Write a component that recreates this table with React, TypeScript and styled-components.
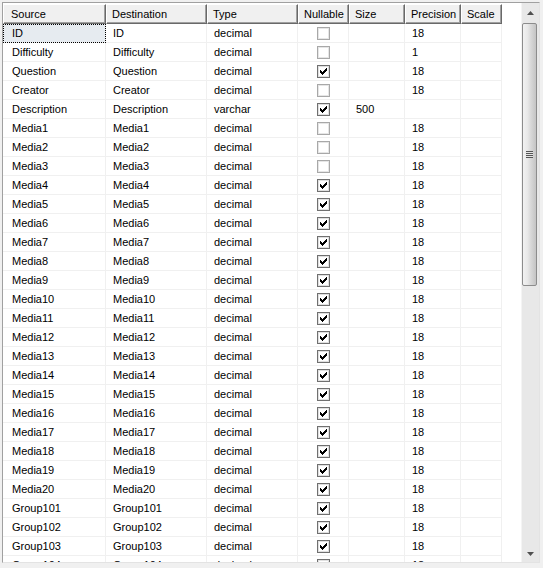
import React from "react";
import styled, { createGlobalStyle } from "styled-components";

const Global = createGlobalStyle`
  html, body { margin: 0; padding: 0; background: #f0f0f0; }
  body { font-family: "Liberation Sans", Arial, sans-serif; font-size: 11px; color: #000; }
`;

const COLS = "103px 101px 91px 51px 56px 56px 41px 1fr";

const Page = styled.div`
  width: 543px;
  height: 568px;
  box-sizing: border-box;
  padding: 2px 3px 5px 2px;
  background: #f0f0f0;
`;

const Frame = styled.div`
  display: flex;
  height: 100%;
  box-sizing: border-box;
  border-top: 1px solid #a0a0a0;
  border-left: 1px solid #a0a0a0;
  border-right: 1px solid #e3e3e3;
  border-bottom: 1px solid #e3e3e3;
  background: #fff;
`;

const GridArea = styled.div`
  flex: 1;
  overflow: hidden;
  display: flex;
  flex-direction: column;
  background: #fff;
`;

const HeaderRow = styled.div`
  display: grid;
  grid-template-columns: ${COLS};
  height: 21px;
  flex: none;
`;

const HeaderCell = styled.div<{ $first?: boolean; $filler?: boolean }>`
  box-sizing: border-box;
  height: 20px;
  margin-top: 1px;
  display: flex;
  align-items: center;
  padding-left: ${(p) => (p.$first ? "7px" : "5px")};
  background: ${(p) => (p.$filler ? "#fff" : "#f0f0f0")};
  border-top: ${(p) => (p.$filler ? "none" : "1px solid #fff")};
  border-left: ${(p) => (p.$filler ? "none" : "1px solid #fff")};
  border-right: ${(p) => (p.$filler ? "none" : "1px solid #696969")};
  border-bottom: ${(p) => (p.$filler ? "none" : "1px solid #696969")};
  box-shadow: ${(p) => (p.$filler ? "none" : "inset -1px -1px 0 #a0a0a0")};
  white-space: nowrap;
  overflow: hidden;
`;

const Body = styled.div`
  display: flex;
  flex-direction: column;
`;

const Row = styled.div`
  display: grid;
  grid-template-columns: ${COLS};
  height: 19px;
  flex: none;
`;

const Cell = styled.div<{ $first?: boolean; $selected?: boolean; $center?: boolean; $filler?: boolean }>`
  box-sizing: border-box;
  height: 19px;
  display: flex;
  align-items: center;
  justify-content: ${(p) => (p.$center ? "center" : "flex-start")};
  padding-left: ${(p) => (p.$center ? "0" : p.$first ? "9px" : "7px")};
  border-right: ${(p) => (p.$filler ? "none" : "1px solid #f0f0f0")};
  border-bottom: ${(p) => (p.$filler ? "none" : "1px solid #f0f0f0")};
  background: ${(p) => (p.$selected ? "#e6ebf0" : "#fff")};
  outline: ${(p) => (p.$selected ? "1px dotted #000" : "none")};
  outline-offset: -1px;
  white-space: nowrap;
  overflow: hidden;
`;

const ScrollBar = styled.div`
  width: 17px;
  flex: none;
  display: flex;
  flex-direction: column;
  background: #e8e8e8;
  border-left: 1px solid #f4f4f4;
`;

const ArrowButton = styled.div<{ $h: number }>`
  height: ${(p) => p.$h}px;
  flex: none;
  display: flex;
  align-items: center;
  justify-content: center;
`;

const Track = styled.div`
  flex: 1;
  display: flex;
  flex-direction: column;
`;

const Thumb = styled.div`
  height: 263px;
  margin: 0 2px 0 0;
  box-sizing: border-box;
  border: 1px solid #8c8c8c;
  border-radius: 2px;
  background: linear-gradient(to right, #f2f2f2 0%, #e8e8e8 35%, #d8d8d8 60%, #c4c4c4 100%);
  display: flex;
  align-items: center;
  justify-content: center;
`;

const Grip = styled.div`
  width: 7px;
  height: 7px;
  background: repeating-linear-gradient(to bottom, #555 0 1px, #e4e4e4 1px 2px);
`;

const Check = ({ checked }: { checked: boolean }) => (
  <svg width="13" height="13" viewBox="0 0 13 13" shapeRendering="crispEdges">
    <rect x="0.5" y="0.5" width="12" height="12" fill="#fff" stroke={checked ? "#707070" : "#a8a8a8"} />
    <rect x="1.5" y="1.5" width="10" height="10" fill="none" stroke={checked ? "#e0e0e0" : "#e6e6e6"} />
    {checked && (
      <g fill="#000">
        <rect x="3" y="5" width="1" height="3" />
        <rect x="4" y="6" width="1" height="3" />
        <rect x="5" y="7" width="1" height="3" />
        <rect x="6" y="6" width="1" height="3" />
        <rect x="7" y="5" width="1" height="3" />
        <rect x="8" y="4" width="1" height="3" />
        <rect x="9" y="3" width="1" height="3" />
      </g>
    )}
  </svg>
);

const Tri = ({ up }: { up: boolean }) => (
  <svg width="7" height="4" viewBox="0 0 7 4">
    {up ? <path d="M3.5 0 L7 4 L0 4 Z" fill="#505050" /> : <path d="M0 0 L7 0 L3.5 4 Z" fill="#505050" />}
  </svg>
);

type RowData = { s: string; d: string; t: string; n: boolean; size: string; p: string };

const rows: RowData[] = [
  { s: "ID", d: "ID", t: "decimal", n: false, size: "", p: "18" },
  { s: "Difficulty", d: "Difficulty", t: "decimal", n: false, size: "", p: "1" },
  { s: "Question", d: "Question", t: "decimal", n: true, size: "", p: "18" },
  { s: "Creator", d: "Creator", t: "decimal", n: false, size: "", p: "18" },
  { s: "Description", d: "Description", t: "varchar", n: true, size: "500", p: "" },
];
for (let i = 1; i <= 20; i++) {
  rows.push({ s: `Media${i}`, d: `Media${i}`, t: "decimal", n: i > 3, size: "", p: "18" });
}
for (let i = 101; i <= 104; i++) {
  rows.push({ s: `Group${i}`, d: `Group${i}`, t: "decimal", n: true, size: "", p: "18" });
}

const headers = ["Source", "Destination", "Type", "Nullable", "Size", "Precision", "Scale"];

export default function App() {
  return (
    <>
      <Global />
      <Page>
        <Frame>
          <GridArea>
            <HeaderRow>
              {headers.map((h, i) => (
                <HeaderCell key={h} $first={i === 0}>
                  {h}
                </HeaderCell>
              ))}
              <HeaderCell $filler />
            </HeaderRow>
            <Body>
              {rows.map((r, i) => (
                <Row key={r.s}>
                  <Cell $first $selected={i === 0}>{r.s}</Cell>
                  <Cell>{r.d}</Cell>
                  <Cell>{r.t}</Cell>
                  <Cell $center>
                    <Check checked={r.n} />
                  </Cell>
                  <Cell>{r.size}</Cell>
                  <Cell>{r.p}</Cell>
                  <Cell />
                  <Cell $filler />
                </Row>
              ))}
            </Body>
          </GridArea>
          <ScrollBar>
            <ArrowButton $h={20}>
              <Tri up />
            </ArrowButton>
            <Track>
              <Thumb>
                <Grip />
              </Thumb>
            </Track>
            <ArrowButton $h={17}>
              <Tri up={false} />
            </ArrowButton>
          </ScrollBar>
        </Frame>
      </Page>
    </>
  );
}
